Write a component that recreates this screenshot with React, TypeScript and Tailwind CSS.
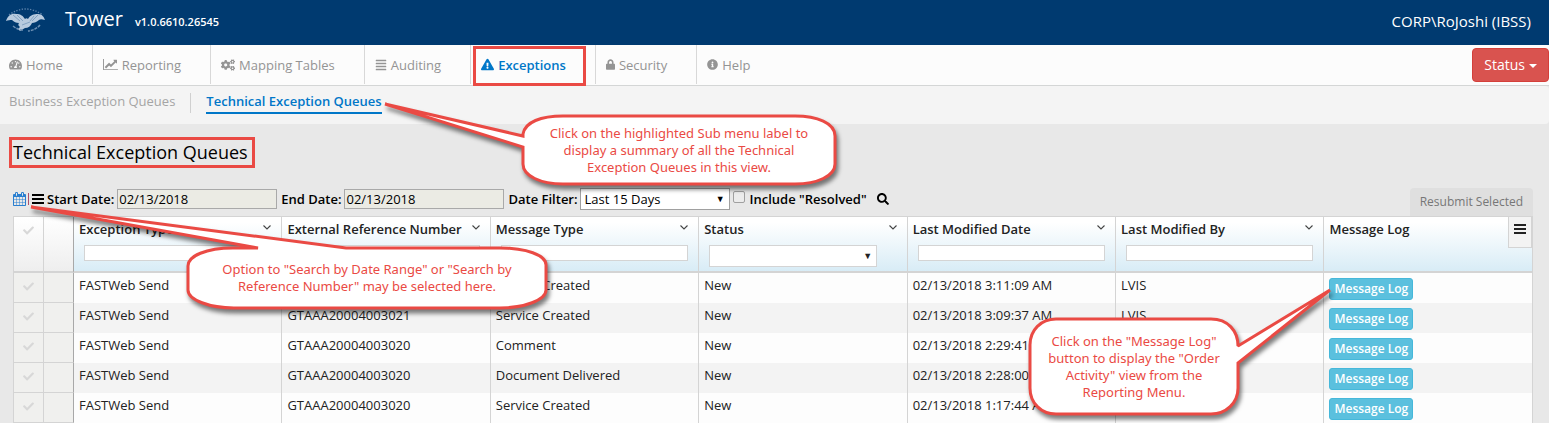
import React from "react";
import {
  FaTachometerAlt,
  FaCogs,
  FaAlignJustify,
  FaExclamationTriangle,
  FaLock,
  FaInfoCircle,
  FaCheck,
  FaSearch,
} from "react-icons/fa";

function LineChartIcon() {
  return (
    <svg viewBox="0 0 2048 1792" className="h-[13px] w-[15px]" fill="currentColor" aria-hidden="true">
      <path d="M2048 1536v128h-2048v-1536h128v1408h1920zM1920 288v435q0 21-19.5 29.5t-35.5-7.5l-121-121-633 633q-10 10-23 10t-23-10l-233-233-416 416-192-192 585-585q10-10 23-10t23 10l233 233 464-464-121-121q-16-16-7.5-35.5t29.5-19.5h435q14 0 23 9t9 23z" />
    </svg>
  );
}

function CalendarIcon() {
  return (
    <svg viewBox="64 0 1664 1792" className="h-[14px] w-[13px]" fill="currentColor" aria-hidden="true">
      <path d="M192 1664h288v-288h-288v288zm352 0h320v-288h-320v288zm-352-352h288v-320h-288v320zm352 0h320v-320h-320v320zm-352-384h288v-288h-288v288zm736 736h320v-288h-320v288zm-384-736h320v-288h-320v288zm768 736h288v-288h-288v288zm-384-352h320v-320h-320v320zm-352-864v-288q0-13-9.5-22.5t-22.5-9.5h-64q-13 0-22.5 9.5t-9.5 22.5v288q0 13 9.5 22.5t22.5 9.5h64q13 0 22.5-9.5t9.5-22.5zm736 864h288v-320h-288v320zm-384-384h320v-288h-320v288zm384 0h288v-288h-288v288zm32-480v-288q0-13-9.5-22.5t-22.5-9.5h-64q-13 0-22.5 9.5t-9.5 22.5v288q0 13 9.5 22.5t22.5 9.5h64q13 0 22.5-9.5t9.5-22.5zm384-64v1280q0 52-38 90t-90 38h-1408q-52 0-90-38t-38-90v-1280q0-52 38-90t90-38h128v-96q0-66 47-113t113-47h64q66 0 113 47t47 113v96h384v-96q0-66 47-113t113-47h64q66 0 113 47t47 113v96h128q52 0 90 38t38 90z" />
    </svg>
  );
}

function BarsIcon() {
  return (
    <svg viewBox="0 0 12 12" className="size-3" fill="currentColor" aria-hidden="true">
      <path d="M0 1h12v2H0zM0 5h12v2H0zM0 9h12v2H0z" />
    </svg>
  );
}

function Chevron() {
  return (
    <svg viewBox="0 0 8 5" className="h-[5px] w-2" fill="none" stroke="#444" strokeWidth="1.1" aria-hidden="true">
      <path d="M0.5 0.5 4 4 7.5 0.5" />
    </svg>
  );
}

function EagleLogo() {
  return (
    <svg viewBox="0 0 40 26" className="h-[26px] w-10" role="img" aria-label="First American">
      <path d="M3 8Q19-4 37 8" fill="none" stroke="#5c83ab" strokeWidth="1.4" strokeDasharray="1.3 1.5" />
      <path
        d="M0 14C2 8 6 6 10 7c5 0 7 2 9 5 1-1 2-1 3 0 2-4 6-5 10-5 4 0 6 3 7 6-3-1-5-1-6 0-2 2-5 3-7 3-1 3-4 5-7 5l-5 3-2-2 2-2c-2-1-2-3-1-4-3 0-5-1-7-3-2 0-4 0-6 1z"
        fill="#b7cade"
      />
      <path d="M7 8l7 6M11 8l6 6M32 8l-6 6M28 9l-4 5M16 18l8-3" stroke="#6c90b4" strokeWidth="0.7" fill="none" />
      <path d="M7 19q5 4 10 4M34 18q-4 5-12 6" fill="none" stroke="#6d90b4" strokeWidth="1.5" strokeDasharray="3 1" />
    </svg>
  );
}

const navItems = [
  { label: "Home", icon: <FaTachometerAlt className="size-[13px]" /> },
  { label: "Reporting", icon: <LineChartIcon /> },
  { label: "Mapping Tables", icon: <FaCogs className="size-[14px]" /> },
  { label: "Auditing", icon: <FaAlignJustify className="size-3" /> },
  { label: "Exceptions", icon: <FaExclamationTriangle className="size-[13px]" />, active: true },
  { label: "Security", icon: <FaLock className="h-[11px] w-[9px]" /> },
  { label: "Help", icon: <FaInfoCircle className="size-[11px]" /> },
];

const columns = [
  "Exception Type",
  "External Reference Number",
  "Message Type",
  "Status",
  "Last Modified Date",
  "Last Modified By",
  "Message Log",
];

const rows = [
  ["FASTWeb Send", "GTAAA20004003021", "Service Created", "New", "02/13/2018 3:11:09 AM", "LVIS"],
  ["FASTWeb Send", "GTAAA20004003021", "Service Created", "New", "02/13/2018 3:09:37 AM", "LVIS"],
  ["FASTWeb Send", "GTAAA20004003020", "Comment", "New", "02/13/2018 2:29:41 AM", "LVIS"],
  ["FASTWeb Send", "GTAAA20004003020", "Document Delivered", "New", "02/13/2018 2:28:00 AM", "LVIS"],
  ["FASTWeb Send", "GTAAA20004003020", "Service Created", "New", "02/13/2018 1:17:44 AM", "LVIS"],
];

function Callout({ place, width, height, path, lines }: {
  place: string;
  width: number;
  height: number;
  path: string;
  lines: string[];
}) {
  return (
    <aside className={`pointer-events-none absolute z-10 flex items-center justify-center ${place}`}>
      <svg
        viewBox={`0 0 ${width} ${height}`}
        className="absolute inset-0 size-full overflow-visible drop-shadow-[2px_4px_2px_rgba(0,0,0,0.5)]"
        aria-hidden="true"
      >
        <path d={path} fill="#fff" stroke="#ea4a44" strokeWidth="3" strokeLinejoin="miter" strokeMiterlimit="2" />
      </svg>
      <p className="relative text-center font-['Noto_Sans',sans-serif] text-[13px] leading-[17px] whitespace-nowrap text-[#ea4a44]">
        {lines.map((line) => (
          <span key={line} className="block">{line}</span>
        ))}
      </p>
    </aside>
  );
}

export default function App() {
  return (
    <div className="relative min-h-screen overflow-hidden bg-[#e8e8e8] font-['Open_Sans',sans-serif] text-[13px] leading-[18px] text-black">
      <header className="flex h-[45px] items-center bg-[#003a70] pr-[18px] pl-[6px] text-white">
        <div className="pb-[6px]"><EagleLogo /></div>
        <h1 className="ml-[19px] pb-2 text-[20px] leading-6">Tower</h1>
        <span className="ml-3 pb-px text-[11px] leading-4 font-semibold">v1.0.6610.26545</span>
        <span className="ml-auto pb-1 text-[15px] leading-5">CORP\RoJoshi (IBSS)</span>
      </header>

      <nav className="flex h-[41px] items-start border-b border-[#d4d6d6] bg-[#fcfcfc]" aria-label="Main">
        {navItems.map((item) => (
          <a
            key={item.label}
            href="#"
            className={`relative flex h-[39px] items-center gap-1 border-[#d8d8d8] pr-[29px] pl-[10px] first:pl-[9px] [&:not(:last-of-type)]:border-r ${
              item.active ? "font-semibold text-[#0077c8]" : "text-[#949494]"
            }`}
          >
            {item.icon}
            {item.label}
            {item.active && <span className="absolute top-px right-[9px] -bottom-[2px] left-[2px] border-3 border-[#ea4a44]" />}
          </a>
        ))}
        <button type="button" className="mt-[3px] ml-auto flex h-[34px] items-center gap-1 rounded border border-[#d43f3a] bg-[#d9534f] px-[11px] text-[14px] text-white">
          Status
          <svg viewBox="0 0 8 4" className="mt-[2px] h-1 w-2" fill="currentColor" aria-hidden="true">
            <path d="M0 0h8L4 4z" />
          </svg>
        </button>
      </nav>

      <nav className="flex h-[38px] items-center rounded-r bg-[#f4f4f4] pb-1 pl-[9px]" aria-label="Exceptions">
        <a href="#" className="mb-1 text-[#a5a5a5]">Business Exception Queues</a>
        <span className="ml-[15px] h-5 w-px bg-[#d0d0d0]" />
        <a href="#" className="ml-[15px] border-b-2 border-[#0077c8] pb-[2px] font-semibold text-[#0077c8]">Technical Exception Queues</a>
      </nav>

      <main className="pr-4 pl-[13px]">
        <h2 className="mt-[13px] -ml-1 w-fit border-3 border-[#ea4a44] px-px pr-1 text-[18px] leading-[25px]">Technical Exception Queues</h2>

        <div className="flex h-[48px] items-end justify-between">
          <div className="mb-[6px] flex h-[22px] items-center">
            <button type="button" aria-label="Search by date range" className="text-[#2a7fd0]"><CalendarIcon /></button>
            <span className="ml-[2px] h-3 w-px bg-[#b0506a]" />
            <button type="button" aria-label="Search by reference number" className="mr-[3px] ml-[3px]"><BarsIcon /></button>
            <label htmlFor="start" className="font-semibold">Start Date:</label>
            <input id="start" defaultValue="02/13/2018" className="ml-[3px] h-5 w-40 border border-[#a9a9a9] bg-[#ebebe4] px-px" />
            <label htmlFor="end" className="ml-1 font-semibold">End Date:</label>
            <input id="end" defaultValue="02/13/2018" className="ml-[3px] h-5 w-40 border border-[#a9a9a9] bg-[#ebebe4] px-px" />
            <label htmlFor="filter" className="ml-1 font-semibold">Date Filter:</label>
            <span className="relative ml-[2px] flex">
              <select id="filter" className="h-[22px] w-[150px] appearance-none border border-[#a0a0a0] bg-white px-1 leading-[18px]">
                <option>Last 15 Days</option>
              </select>
              <span className="pointer-events-none absolute top-[2px] right-[5px] text-[9px]">▼</span>
            </span>
            <input id="resolved" type="checkbox" className="mr-[5px] mb-1 ml-[3px] size-3 appearance-none rounded-xs border border-[#a0a0a0] bg-[#ececec]" />
            <label htmlFor="resolved" className="font-semibold">Include "Resolved"</label>
            <button type="button" aria-label="Search" className="ml-[10px]"><FaSearch className="size-3" /></button>
          </div>
          <button type="button" className="h-[28px] rounded-t bg-[#dfdfdf] px-[10px] text-[12px] text-[#777]">Resubmit Selected</button>
        </div>

        <table className="w-full table-fixed border-separate border-spacing-0 border-t border-r border-l border-[#d4d4d4]">
          <colgroup>
            <col className="w-[30px]" />
            <col className="w-[30px]" />
            {columns.map((c, i) => <col key={c} className={i < 6 ? "w-[13.73%]" : ""} />)}
          </colgroup>
          <thead>
            <tr className="h-14 align-top">
              <th className="border-r border-b-2 border-[#d4d4d4] bg-linear-to-b from-white to-[#eee]">
                <FaCheck className="mx-auto mt-2 size-[11px] text-[#d8d8d8]" aria-label="Select all" />
              </th>
              <th className="border-r border-b-2 border-[#d4d4d4] border-r-[#a8a8a8] bg-linear-to-b from-white to-[#eee]" aria-label="Row" />
              {columns.map((c, i) => (
                <th
                  key={c}
                  className="relative border-b-2 border-[#d4d4d4] bg-linear-to-b from-white from-10% to-[#d8ecf6] pr-[10px] pl-[5px] text-left font-semibold text-[#222] [&:not(:last-child)]:border-r"
                >
                  <div className="mb-1 flex h-6 items-center justify-between">
                    {c}
                    {i < 6 && <button type="button" aria-label={`${c} menu`} className="pb-1"><Chevron /></button>}
                  </div>
                  {i < 6 && i !== 3 && (
                    <input aria-label={`Filter ${c}`} className="ml-[5px] block h-4 w-[calc(100%-5px)] border border-[#d4d4d4] bg-white" />
                  )}
                  {i === 3 && (
                    <span className="relative ml-[5px] flex w-[168px]">
                      <select aria-label="Filter Status" className="h-[22px] w-full appearance-none border border-[#d4d4d4] bg-white" />
                      <span className="pointer-events-none absolute top-[2px] right-[5px] text-[9px] font-normal">▼</span>
                    </span>
                  )}
                  {i === 6 && (
                    <button type="button" aria-label="Grid menu" className="absolute top-0 right-0 flex h-[31px] w-6 items-start justify-center border border-t-0 border-[#d4d4d4] bg-[#f3f3f3] pt-[6px]">
                      <BarsIcon />
                    </button>
                  )}
                </th>
              ))}
            </tr>
          </thead>
          <tbody>
            {rows.map((row, r) => (
              <tr key={r} className="h-[30px] align-top odd:bg-[#fdfdfd] even:bg-[#f3f3f3]">
                <td className="border-r border-b border-[#d4d4d4] bg-[#f0f0ee]">
                  <FaCheck className="mx-auto mt-2 size-[11px] text-[#d8d8d8]" aria-label="Select row" />
                </td>
                <td className="border-r border-b border-[#d4d4d4] border-r-[#a8a8a8] bg-[#f0f0ee]" />
                {row.map((cell, i) => (
                  <td key={i} className="border-r border-[#d4d4d4] pt-[3px] pl-[5px] whitespace-nowrap text-[#222]">{cell}</td>
                ))}
                <td className="pt-[5px] pl-[5px]">
                  <button type="button" className="block h-[22px] rounded-[3px] border border-[#46b8da] bg-[#5bc0de] px-1 text-[12px] font-semibold text-white">Message Log</button>
                </td>
              </tr>
            ))}
          </tbody>
        </table>
      </main>

      <Callout
        place="top-[114px] left-[521px] h-[72px] w-[316px]"
        width={316}
        height={72}
        path="M2 20C4 8 20 2 42 2H274C296 2 314 9 314 22V50C314 62 296 70 274 70H42C20 70 2 62 2 50V33L-136 -10L2 22Z"
        lines={["Click on the highlighted Sub menu label to", "display a summary of all the Technical", "Exception Queues in this view."]}
      />
      <Callout
        place="top-[246px] left-[186px] h-[64px] w-[362px]"
        width={362}
        height={64}
        path="M72 2L-155 -39L160 2H314C340 2 360 9 360 19V44C360 54 338 62 314 62H48C24 62 2 54 2 44V20C2 10 20 2 47 2Z"
        lines={['Option to "Search by Date Range" or "Search by', 'Reference Number" may be selected here.']}
      />
      <Callout
        place="top-[317px] left-[1028px] h-[99px] w-[212px]"
        width={212}
        height={99}
        path="M28 2H183C200 2 210 14 210 29L302 -27L210 46V71C210 86 198 97 183 97H28C13 97 2 86 2 71V28C2 13 13 2 28 2Z"
        lines={['Click on the "Message Log"', 'button to display the "Order', 'Activity" view from the', "Reporting Menu."]}
      />
    </div>
  );
}
